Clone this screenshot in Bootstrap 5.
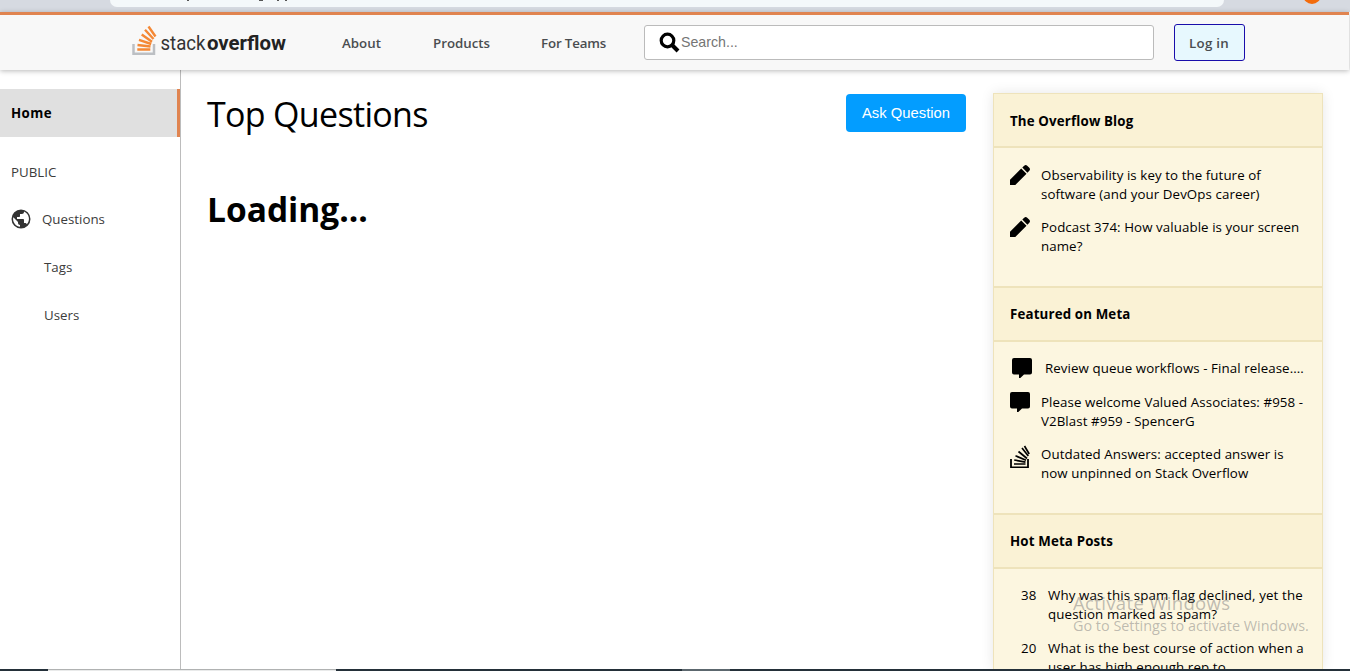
<!DOCTYPE html>
<html lang="en">
<head>
<meta charset="utf-8">
<meta name="viewport" content="width=device-width, initial-scale=1">
<title>Stack Overflow</title>
<link href="https://cdn.jsdelivr.net/npm/bootstrap@5.3.0/dist/css/bootstrap.min.css" rel="stylesheet">
<style>
body{height:671px;overflow:hidden;background:#fff;color:#000;font-family:"Open Sans","Noto Sans",sans-serif;font-size:13.3px;line-height:19px}
.chrome{height:12px;background:#d6dae1;padding-left:110px;padding-right:126px}
.urlbar{height:6.5px;background:#f4f8fa;border-radius:0 0 16px 16px;overflow:hidden;position:relative}
.urlbar i{position:absolute;top:0;height:1px;background:#555}
.avatar{position:absolute;left:1303px;top:-14px;width:18px;height:18px;border-radius:50%;background:#f36c0c}
.topbar{width:1349px;height:58px;background:#f8f8f8;border-top:3px solid #e08450;box-shadow:0 1px 5px rgba(0,0,0,.28);position:relative;z-index:2;padding-left:131px}
.topbar a{color:#4a4d50;font-weight:600;text-decoration:none;white-space:nowrap}
.menu{width:302px;padding-top:1px}
.search{width:510px;height:35px;background:#fff;border:1px solid #bbb;border-radius:3px;padding-left:14px;font:14.2px/33px "Liberation Sans",sans-serif;color:#757575}
.login{width:71px;height:37px;border:1px solid #1a0dab;border-radius:3px;background:#e7f8fe;padding:1px 1px 0 0;letter-spacing:.3px}
.stage{height:599px}
.side{width:181px;border-right:1px solid #bcbcbc;padding-top:19px;color:#3c3c3c}
.home{height:48px;background:#e0e0e0;border-right:3px solid #e08450;padding-left:11px;color:#000;letter-spacing:.4px}
.entry{height:48px}
.content{width:812px;padding:24px 27px 0 26px}
.title{font-size:34px;line-height:44px;font-weight:400;color:#000;letter-spacing:-.68px;margin-top:-2px}
.ask{width:120px;height:38px;background:#039dff;color:#fff;border-radius:4px;font:14.8px/38px "Liberation Sans",sans-serif}
.loading{font-size:33.5px;line-height:44px;font-weight:700;margin-top:51px}
.panel{width:330px;margin-top:23px;box-shadow:0 0 12px rgba(0,0,0,.1);height:576px;overflow:hidden;background:#fcf6e0;letter-spacing:.08px}
.phead{height:54px;background:#faf2d5;border:1px solid #eee3bb;padding-left:16px;font-weight:700;letter-spacing:.15px}
.pbody{border:1px solid #eee3bb;padding:16px 0 0 16px}
.pbody svg{flex:none}
.pitem{white-space:nowrap;margin-bottom:13px}
.pitem span{margin-top:1px}
.pitem svg{margin-right:11px}
.pitem .num{width:16px;margin-left:11px;margin-right:11px}
.watermark{position:absolute;left:1073px;top:590px;color:rgba(120,120,120,.48);z-index:5;white-space:nowrap}
.taskbar{position:absolute;left:0;top:669px;width:1350px;height:2px;background:#243039;z-index:6}
.taskbar b{position:absolute;left:48px;width:288px;height:2px;background:#e9eaea;border-top:1px solid #b0b2b2}
.taskbar em{position:absolute;left:682px;width:48px;height:2px;background:#5c676e}
</style>
</head>
<body>
<svg width="0" height="0" class="position-absolute">
<defs>
<symbol id="pen" viewBox="0 0 20 20"><path d="M0 20v-5.300L11.200 3.500l5.300 5.300L5.300 20zM12.300 2.600l1.900-1.900a2.200 2.200 0 0 1 3 0l2.100 2.100a2.200 2.200 0 0 1 0 3l-1.900 1.900z"/></symbol>
<symbol id="chat" viewBox="0 0 20 20"><path d="M2 0h16a2 2 0 0 1 2 2v12.500a2 2 0 0 1-2 2h-6L8.300 20H7v-3.500H2a2 2 0 0 1-2-2V2a2 2 0 0 1 2-2z"/></symbol>
</defs></svg>
<div class="chrome"><div class="urlbar"><i style="left:77px;width:2px"></i><i style="left:149px;width:4px"></i><i style="left:167px;width:2px"></i><i style="left:175px;width:2px"></i></div></div>
<div class="avatar"></div>
<header class="topbar d-flex align-items-center">
  <svg width="156" height="34" viewBox="0 0 156 34" style="margin-top:-4px">
    <path d="M2.500 20v9.800h20.500V20" fill="none" stroke="#bcbfc3" stroke-width="2.500"/>
    <g stroke="#f48835" stroke-width="2.400"><path d="M6.300 25.500h13M6.500 21l13 1.500M8 15.800l12.200 4.200M10.700 10.500l10.300 7.300M14 5.800l8.500 9.200M17.500 2.500l7 10"/></g>
    <text x="29.500" y="25.500" font-family="Roboto" font-size="20.500" fill="#333" textLength="45" lengthAdjust="spacingAndGlyphs">stack</text>
    <text x="76" y="25.500" font-family="Roboto" font-weight="700" font-size="20.500" fill="#222" textLength="79" lengthAdjust="spacingAndGlyphs">overflow</text>
  </svg>
  <nav class="menu d-flex" style="margin-left:55px"><a href="#" style="width:91px">About</a><a href="#" style="width:108px">Products</a><a href="#" style="letter-spacing:-.15px">For Teams</a></nav>
  <div class="search d-flex align-items-center"><svg width="21" height="21" viewBox="0 0 21 21" class="me-1" fill="none" stroke="#000"><circle cx="8.500" cy="8.500" r="6.300" stroke-width="3.200"/><path d="M13 13l6 6" stroke-width="4"/></svg><span style="margin-left:-3px">Search...</span></div>
  <a href="#" class="login d-flex align-items-center justify-content-center" style="margin-left:20px">Log in</a>
</header>
<main class="stage d-flex">
  <aside class="side flex-shrink-0">
    <div class="home d-flex align-items-center fw-bold">Home</div>
    <div style="padding:26px 0 13px 11px">PUBLIC</div>
    <div class="entry d-flex align-items-center" style="padding-left:9px"><svg width="24" height="24" viewBox="0 0 24 24" fill="#333"><path d="M12 2.500a9.500 9.500 0 1 0 0 19 9.500 9.500 0 0 0 0-19zm-1 17.300c-3.900-.5-6.900-3.800-6.900-7.800 0-.6.100-1.200.2-1.700L9 15v1c0 1 .9 2 2 2zm6.800-2.500c-.2-.8-1-1.300-1.800-1.300h-1v-3c0-.5-.4-1-1-1H8v-2h2c.6 0 1-.4 1-1V7h2c1.100 0 2-.9 2-2v-.4a7.900 7.900 0 0 1 2.800 12.700z"/></svg><span style="margin-left:9px">Questions</span></div>
    <div class="entry d-flex align-items-center" style="padding-left:44px">Tags</div>
    <div class="entry d-flex align-items-center" style="padding-left:44px">Users</div>
  </aside>
  <section class="content flex-shrink-0">
    <div class="d-flex justify-content-between align-items-start"><div class="title">Top Questions</div><div class="ask text-center">Ask Question</div></div>
    <div class="loading">Loading...</div>
  </section>
  <aside class="panel flex-shrink-0">
    <div class="phead d-flex align-items-center" style="padding-top:3px">The Overflow Blog</div>
    <div class="pbody" style="height:140px;padding-top:17px">
      <div class="pitem d-flex"><svg width="20" height="20"><use href="#pen"/></svg><span>Observability is key to the future of<br>software (and your DevOps career)</span></div>
      <div class="pitem d-flex"><svg width="20" height="20"><use href="#pen"/></svg><span>Podcast 374: How valuable is your screen<br>name?</span></div>
    </div>
    <div class="phead d-flex align-items-center">Featured on Meta</div>
    <div class="pbody" style="height:173px">
      <div class="pitem d-flex" style="margin:0 0 14px 2px"><svg width="20" height="20" style="margin-right:13px"><use href="#chat"/></svg><span>Review queue workflows - Final release....</span></div>
      <div class="pitem d-flex"><svg width="20" height="20"><use href="#chat"/></svg><span>Please welcome Valued Associates: #958 -<br>V2Blast #959 - SpencerG</span></div>
      <div class="pitem d-flex"><svg width="20" height="24" viewBox="0 0 20 24" fill="none" stroke="#000"><path d="M1 15v8.300h17V15" stroke-width="1.800"/><path d="M4 20h11.500M4.200 16l11.300 2.200M5.500 11.800l10.500 4.500M8.500 7.500l8.500 7M12 4l6.300 8M14.500 2l4.700 8" stroke-width="1.700"/></svg><span>Outdated Answers: accepted answer is<br>now unpinned on Stack Overflow</span></div>
    </div>
    <div class="phead d-flex align-items-center">Hot Meta Posts</div>
    <div class="pbody" style="letter-spacing:.13px">
      <div class="pitem d-flex" style="margin-bottom:14px"><span class="num">38</span><span>Why was this spam flag declined, yet the<br>question marked as spam?</span></div>
      <div class="pitem d-flex mb-0"><span class="num">20</span><span>What is the best course of action when a<br>user has high enough rep to</span></div>
    </div>
  </aside>
</main>
<div class="watermark"><div style="font-size:18.5px;line-height:26px;letter-spacing:.35px">Activate Windows</div><div style="font-size:14.4px;line-height:19px">Go to Settings to activate Windows.</div></div>
<div class="taskbar"><b></b><em></em></div>
<script src="https://cdn.jsdelivr.net/npm/bootstrap@5.3.0/dist/js/bootstrap.bundle.min.js"></script>
</body>
</html>
